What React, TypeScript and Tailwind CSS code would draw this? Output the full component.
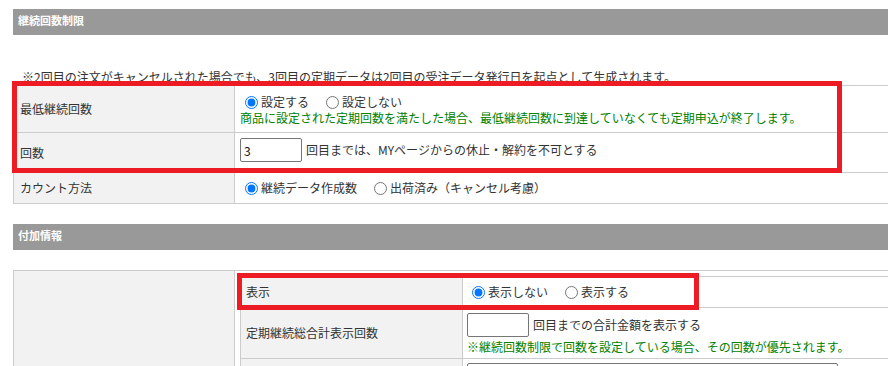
import React from 'react';

const Radio: React.FC<{ name: string; label: string; checked?: boolean }> = ({ name, label, checked }) => (
  <label className="flex items-center mr-[12px]">
    <input
      type="radio"
      name={name}
      defaultChecked={checked}
      className="m-0 ml-[5px] mr-[3px] w-[13px] h-[13px]"
    />
    <span>{label}</span>
  </label>
);

const SectionHeader: React.FC<{ title: string }> = ({ title }) => (
  <div className="h-[26px] bg-[#999999] pl-[5px] pt-[3px] text-[11px] leading-[16px] font-bold text-white">
    {title}
  </div>
);

const App: React.FC = () => {
  return (
    <div
      className="relative w-[888px] h-[366px] overflow-hidden bg-white text-[12px] leading-[16px] text-[#333333]"
      style={{ fontFamily: '"Noto Sans CJK JP", "Noto Sans", sans-serif' }}
    >
      <div className="ml-[13px] w-[900px] pt-[9px]">
        <SectionHeader title="継続回数制限" />

        <div className="pt-[34px] pl-[9px] h-[50px]">
          ※2回目の注文がキャンセルされた場合でも、3回目の定期データは2回目の受注データ発行日を起点として生成されます。
        </div>

        <div className="border-t border-l border-[#cccccc]">
          <div className="flex h-[47px] border-b border-[#cccccc]">
            <div className="w-[221px] shrink-0 bg-[#f2f2f2] border-r border-[#cccccc] pl-[6px] flex items-center">
              最低継続回数
            </div>
            <div className="flex-1 px-[5px] pt-[8px]">
              <div className="flex items-center h-[16px]">
                <Radio name="min" label="設定する" checked />
                <Radio name="min" label="設定しない" />
              </div>
              <div className="text-[#008000]">
                商品に設定された定期回数を満たした場合、最低継続回数に到達していなくても定期申込が終了します。
              </div>
            </div>
          </div>

          <div className="flex h-[40px] border-b border-[#cccccc]">
            <div className="w-[221px] shrink-0 bg-[#f2f2f2] border-r border-[#cccccc] pl-[6px] flex items-center">
              回数
            </div>
            <div className="flex-1 px-[5px] pt-[5px] flex items-start">
              <input
                type="text"
                defaultValue="3"
                className="w-[62px] h-[24px] border border-[#767676] rounded-[2px] px-[3px] text-[12px] text-[#111]"
              />
              <span className="ml-[4px] mt-[4px]">回目までは、MYページからの休止・解約を不可とする</span>
            </div>
          </div>

          <div className="flex h-[31px] border-b border-[#cccccc]">
            <div className="w-[221px] shrink-0 bg-[#f2f2f2] border-r border-[#cccccc] pl-[6px] flex items-center">
              カウント方法
            </div>
            <div className="flex-1 px-[5px] flex items-center">
              <Radio name="count" label="継続データ作成数" checked />
              <Radio name="count" label="出荷済み（キャンセル考慮）" />
            </div>
          </div>
        </div>

        <div className="mt-[20px]">
          <SectionHeader title="付加情報" />
        </div>

        <div className="mt-[20px] flex border-t border-l border-[#cccccc] h-[200px]">
          <div className="w-[221px] shrink-0 bg-[#f2f2f2] border-r border-[#cccccc]" />
          <div className="flex-1 p-[5px]">
            <div className="border-t border-l border-[#cccccc]">
              <div className="flex h-[31px] border-b border-[#cccccc]">
                <div className="w-[222px] shrink-0 bg-[#f2f2f2] border-r border-[#cccccc] pl-[5px] flex items-center">
                  表示
                </div>
                <div className="flex-1 px-[4px] flex items-center">
                  <Radio name="disp" label="表示しない" checked />
                  <Radio name="disp" label="表示する" />
                </div>
              </div>

              <div className="flex h-[51px] border-b border-[#cccccc]">
                <div className="w-[222px] shrink-0 bg-[#f2f2f2] border-r border-[#cccccc] pl-[5px] flex items-center">
                  定期継続総合計表示回数
                </div>
                <div className="flex-1 px-[4px] pt-[5px]">
                  <div className="flex items-start">
                    <input
                      type="text"
                      className="w-[62px] h-[24px] border border-[#767676] rounded-[2px] px-[3px] text-[12px]"
                    />
                    <span className="ml-[4px] mt-[4px]">回目までの合計金額を表示する</span>
                  </div>
                  <div className="text-[#008000] mt-[2px]">
                    ※継続回数制限で回数を設定している場合、その回数が優先されます。
                  </div>
                </div>
              </div>

              <div className="flex h-[60px] border-b border-[#cccccc]">
                <div className="w-[222px] shrink-0 bg-[#f2f2f2] border-r border-[#cccccc]" />
                <div className="flex-1 px-[4px] pt-[4px]">
                  <input
                    type="text"
                    className="w-[371px] h-[24px] border border-[#767676] rounded-[2px]"
                  />
                </div>
              </div>
            </div>
          </div>
        </div>
      </div>

      {/* annotation boxes */}
      <div className="absolute left-[12px] top-[81px] w-[830px] h-[92px] border-[5px] border-[#ed1c24] pointer-events-none" />
      <div className="absolute left-[237px] top-[273px] w-[462px] h-[37px] border-[5px] border-[#ed1c24] pointer-events-none" />
    </div>
  );
};

export default App;
